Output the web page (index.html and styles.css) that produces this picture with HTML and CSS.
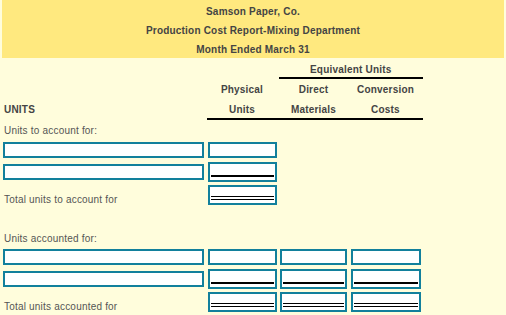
FILE: index.html
```html
<!DOCTYPE html>
<html lang="en">
<head>
  <meta charset="UTF-8">
  <meta name="viewport" content="width=device-width, initial-scale=1.0">
  <title>Production Cost Report</title>
  <link rel="stylesheet" href="styles.css">
</head>
<body>
  <div class="report-title">
    <p>Samson Paper, Co.</p>
    <p>Production Cost Report-Mixing Department</p>
    <p>Month Ended March 31</p>
  </div>

  <form class="report">
    <!-- column headings -->
    <div class="grid head">
      <span class="eq">Equivalent Units</span>
      <span class="col-2 h1">Physical</span>
      <span class="h1">Direct</span>
      <span class="h1">Conversion</span>
      <span class="units-title h2">UNITS</span>
      <span class="h2">Units</span>
      <span class="h2">Materials</span>
      <span class="h2">Costs</span>
      <span class="rule"></span>
    </div>

    <p class="section">Units to account for:</p>
    <div class="grid row first">
      <span class="box"><input type="text"></span>
      <span class="box"><input type="text"></span>
    </div>
    <div class="grid row tall">
      <span class="box"><input type="text"></span>
      <span class="box sub"><input type="text"></span>
    </div>
    <div class="grid row tall total-row">
      <span class="total-label">Total units to account for</span>
      <span class="box total"><input type="text"></span>
    </div>

    <p class="section second">Units accounted for:</p>
    <div class="grid row first">
      <span class="box"><input type="text"></span>
      <span class="box"><input type="text"></span>
      <span class="box"><input type="text"></span>
      <span class="box"><input type="text"></span>
    </div>
    <div class="grid row tall">
      <span class="box"><input type="text"></span>
      <span class="box sub"><input type="text"></span>
      <span class="box sub"><input type="text"></span>
      <span class="box sub"><input type="text"></span>
    </div>
    <div class="grid row tall total-row">
      <span class="total-label">Total units accounted for</span>
      <span class="box total"><input type="text"></span>
      <span class="box total"><input type="text"></span>
      <span class="box total"><input type="text"></span>
    </div>
  </form>
</body>
</html>
```

FILE: styles.css
```css
body {
  font-family: "Liberation Sans", Arial, sans-serif;
  letter-spacing: 0.2px;
  margin: 0 2px;
  background-color: #fffddc;
  color: #555;
}

.report-title {
  background-color: #ffe97f;
  height: 58px;
  padding-top: 2px;
  box-sizing: border-box;
  text-align: center;
}

.report-title p {
  margin: 0;
  font-size: 10px;
  font-weight: bold;
  line-height: 19px;
  color: #444;
}

.report {
  padding-left: 1px;
}

/* name column + physical + two equivalent columns */
.grid {
  display: grid;
  grid-template-columns: 201px 69px 67px 70px;
  column-gap: 3.5px;
}

.head {
  font-size: 10px;
  font-weight: bold;
  color: #444;
  text-align: center;
}

.eq {
  grid-column: 3 / 5;
  padding-top: 5px;
  line-height: 14px;
  border-bottom: 2px solid #000;
  margin: 0 -2px 0 -1px;
}

.col-2 {
  grid-column: 2;
}

.h1 {
  padding-top: 1px;
  line-height: 19px;
}

.h2 {
  padding-top: 2px;
  line-height: 17px;
}

.units-title {
  text-align: left;
  padding-left: 1px;
}

.rule {
  grid-column: 2 / 5;
  height: 2px;
  background: #000;
  margin: 0 -2px 0 -1px;
}

.section {
  margin: 0;
  font-size: 10px;
  padding: 2px 0 0 1px;
  line-height: 18px;
}

.section.second {
  margin-top: 23px;
}

.row {
  align-items: center;
  height: 16px;
}

.row.first {
  margin-top: 2px;
}

.section.second + .row.first {
  margin-top: 1px;
}

.row.tall {
  height: 20px;
  margin-top: 4px;
}

.row.total-row {
  margin-top: 3px;
}

.box {
  display: flex;
  align-items: flex-end;
  height: 16px;
  border: 2px solid #12809c;
  background: #fff;
  box-sizing: border-box;
}

.box input {
  flex: 1;
  min-width: 0;
  height: 100%;
  border: none;
  padding: 0;
  background: transparent;
  box-sizing: border-box;
}

.box.sub,
.box.total {
  height: 20px;
  padding: 0 1px 3px;
}

.box.sub input {
  border-bottom: 2px solid #000;
}

.box.total input {
  border-bottom: 4px double #000;
}

.total-label {
  font-size: 10px;
  align-self: end;
  padding-left: 1px;
  line-height: 10px;
}
```
